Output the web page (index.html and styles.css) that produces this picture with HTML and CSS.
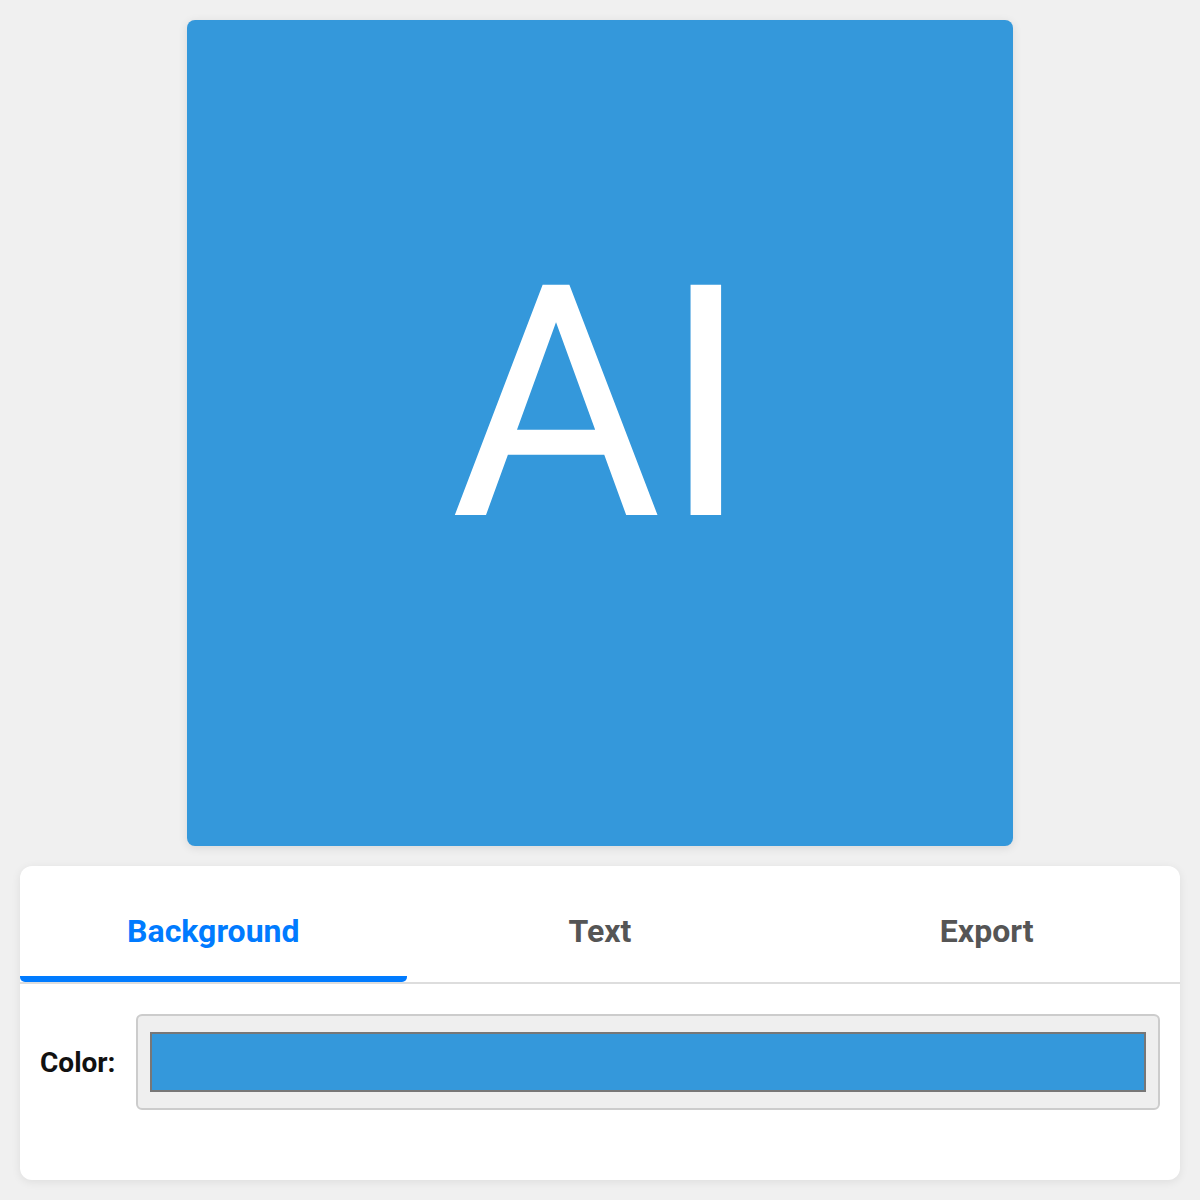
FILE: index.html
```html
<!DOCTYPE html>
<html lang="en">

<head>
    <meta charset="UTF-8">
    <meta name="viewport" content="width=device-width, initial-scale=1.0">
    <title>Icon Maker</title>

    <link rel="stylesheet" href="styles.css">
</head>

<body>
    <div class="preview">
        <span class="preview-text">AI</span>
    </div>

    <div class="panel">
        <div class="tabs">
            <div class="tab active">Background</div>
            <div class="tab">Text</div>
            <div class="tab">Export</div>
        </div>
        <div class="tab-content">
            <div class="form-row">
                <label class="form-label">Color:</label>
                <div class="color-input">
                    <div class="color-swatch"></div>
                </div>
            </div>
        </div>
    </div>
</body>

</html>
```

FILE: styles.css
```css
/* Global reset */

* {
    margin: 0;
    padding: 0;
    box-sizing: border-box;
}

body {
    font-family: Roboto, 'Liberation Sans', Arial, sans-serif;
    background-color: #f0f0f0;
    color: #111;
    padding: 20px;
}

/* Preview canvas */

.preview {
    width: 826px;
    height: 826px;
    margin: 0 auto;
    background-color: #3498db;
    border-radius: 8px;
    box-shadow: 0 2px 10px rgba(0, 0, 0, 0.1);
    display: flex;
    justify-content: center;
    align-items: center;
}

.preview-text {
    font-size: 324px;
    line-height: 1;
    color: white;
    margin-bottom: 59px;
}

/* Settings panel */

.panel {
    margin-top: 20px;
    height: 314px;
    background-color: white;
    border-radius: 12px;
    box-shadow: 0 2px 10px rgba(0, 0, 0, 0.08);
    overflow: hidden;
}

.tabs {
    display: flex;
    border-bottom: 2px solid #ddd;
}

.tab {
    flex: 1;
    text-align: center;
    font-size: 32px;
    font-weight: bold;
    line-height: 36px;
    color: #555;
    padding: 47px 0 27px;
    border-bottom: 6px solid transparent;
    cursor: pointer;
}

.tab.active {
    color: #007bff;
    border-bottom-color: #007bff;
    border-radius: 0 0 5px 5px;
}

.tab-content {
    padding: 30px 20px;
}

.form-row {
    display: flex;
    align-items: center;
    gap: 21px;
}

.form-label {
    font-size: 28px;
    font-weight: bold;
    color: #111;
}

.color-input {
    flex: 1;
    height: 96px;
    padding: 16px 12px;
    background-color: #efefef;
    border: 2px solid #ccc;
    border-radius: 6px;
}

.color-swatch {
    height: 100%;
    background-color: #3498db;
    border: 2px solid #777;
}
```
